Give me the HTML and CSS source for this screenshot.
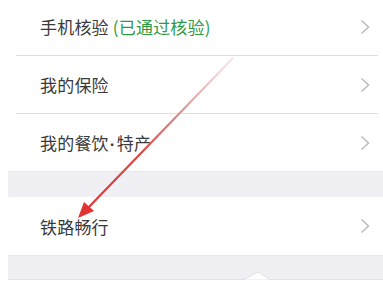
FILE: index.html
```html
<!DOCTYPE html>
<html lang="zh-CN">
<head>
<meta charset="utf-8">
<link rel="stylesheet" href="styles.css">
</head>
<body>
<div class="page">
  <div class="group">
    <div class="row"><span class="label">手机核验 <span class="ok">(已通过核验)</span></span><svg class="chev" width="10" height="16" viewBox="0 0 10 16"><polyline points="1.5,1.5 8.5,8 1.5,14.5"/></svg></div>
    <div class="divider"></div>
    <div class="row"><span class="label">我的保险</span><svg class="chev" width="10" height="16" viewBox="0 0 10 16"><polyline points="1.5,1.5 8.5,8 1.5,14.5"/></svg></div>
    <div class="divider"></div>
    <div class="row"><span class="label">我的餐饮<span class="dot">·</span>特产</span><svg class="chev" width="10" height="16" viewBox="0 0 10 16"><polyline points="1.5,1.5 8.5,8 1.5,14.5"/></svg></div>
  </div>
  <div class="gap"></div>
  <div class="group">
    <div class="row tall"><span class="label">铁路畅行</span><svg class="chev" width="10" height="16" viewBox="0 0 10 16"><polyline points="1.5,1.5 8.5,8 1.5,14.5"/></svg></div>
  </div>
  <div class="gap short"></div>
  <div class="bottom"></div>
</div>
<svg class="overlay" width="383" height="284" viewBox="0 0 383 284">
  <defs>
    <linearGradient id="g" x1="233" y1="58" x2="80" y2="216" gradientUnits="userSpaceOnUse">
      <stop offset="0" stop-color="#f3d6d6" stop-opacity="0.6"/>
      <stop offset="0.35" stop-color="#d99090"/>
      <stop offset="0.6" stop-color="#d94848"/>
      <stop offset="1" stop-color="#e03434"/>
    </linearGradient>
  </defs>
  <line x1="233" y1="58" x2="86" y2="210" stroke="url(#g)" stroke-width="2.2" stroke-linecap="round"/>
  <polygon points="78,218 84,202 94,211" fill="#e03434"/>
  <polyline points="244,279.5 258,272 270,279.5" fill="#ffffff" stroke="#e2e2e6" stroke-width="1"/>
</svg>
</body>
</html>
```
FILE: styles.css
```css
html, body {
  margin: 0;
  padding: 0;
  background: #ffffff;
  width: 383px;
  height: 284px;
  overflow: hidden;
}
body {
  position: relative;
  font-family: "Noto Sans CJK SC", "Noto Sans", sans-serif;
}
.page {
  margin-left: 8px;
  margin-top: -2px;
}
.group {
  background: #ffffff;
}
.row {
  height: 57px;
  display: flex;
  align-items: center;
  justify-content: space-between;
  padding-left: 32px;
  padding-right: 13px;
}
.row.tall {
  height: 58px;
}
.label {
  font-size: 17px;
  color: #3a3a3a;
  letter-spacing: 0.2px;
}
.dot {
  font-family: "Liberation Sans", sans-serif;
  font-weight: bold;
  margin: 0 1px;
}
.ok {
  color: #2f9a44;
}
.chev polyline {
  fill: none;
  stroke: #bbbbbb;
  stroke-width: 1.5;
}
.divider {
  height: 1px;
  background: #e0e0e0;
  margin: 0 5px 0 8px;
}
.gap {
  height: 25px;
  background: #efeff4;
  border-top: 1px solid #e6e6ea;
}
.gap.short {
  height: 23px;
}
.bottom {
  height: 10px;
  background: #ffffff;
  border-top: 1px solid #e2e2e6;
}
.overlay {
  position: absolute;
  left: 0;
  top: 0;
  pointer-events: none;
}
```
